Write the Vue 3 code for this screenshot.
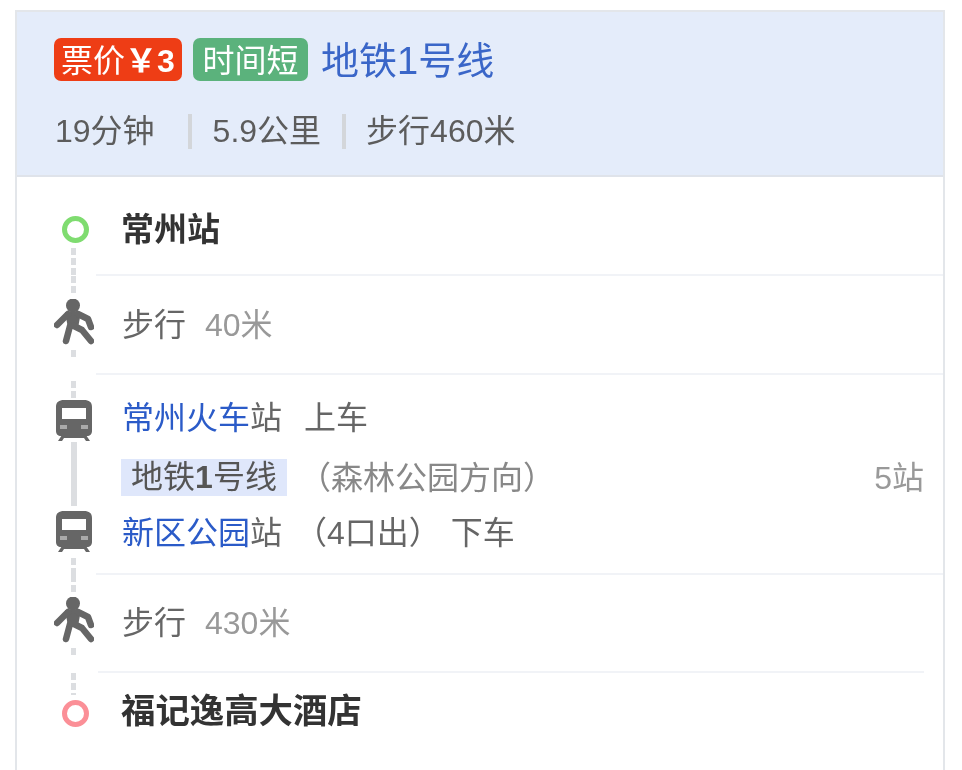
<script setup>
// route card: one transit plan with its steps
const WALK_COLOR = "#666";
</script>

<template>
  <section class="card">
    <header class="head">
      <div class="titleRow">
        <span class="tag red">票价<b>￥3</b></span>
        <span class="tag green">时间短</span>
        <a class="title">地铁1号线</a>
      </div>
      <div class="meta">
        <span>19分钟</span>
        <i class="sep first"></i>
        <span>5.9公里</span>
        <i class="sep"></i>
        <span>步行460米</span>
      </div>
    </header>

    <div class="row">
      <div class="rail">
        <span class="ring start"></span>
        <span class="dash d28"></span>
      </div>
      <div class="body single top">
        <strong>常州站</strong>
      </div>
    </div>

    <div class="row">
      <div class="rail">
        <span class="dash d19"></span>
        <svg class="walk" viewBox="0 0 40 46">
          <circle cx="19" cy="6.5" r="7" :fill="WALK_COLOR" />
          <path d="M11 13H27L24 29H14Z" :fill="WALK_COLOR" />
          <path d="M14 15L3 26M24 15L34 20L37 28M16 27L12 42M20 27L28 31L37 42" :stroke="WALK_COLOR" stroke-width="6.5" stroke-linecap="round" stroke-linejoin="round" fill="none" />
        </svg>
        <span class="dash d25"></span>
      </div>
      <div class="body single">
        <span class="walkText">步行</span><span class="dist">40米</span>
      </div>
    </div>

    <div class="row">
      <div class="rail">
        <span class="dash d19b"></span>
        <svg class="train" viewBox="0 0 36 42">
          <path fill-rule="evenodd" d="M8 1H28C33 1 36 3 36 8V32C36 35 34 37 31 37H5C2 37 0 35 0 32V8C0 3 3 1 8 1ZM6 9V20H30V9Z" fill="#666" />
          <path d="M4 26H11V30H4ZM25 26H32V30H25Z" fill="#aaa" />
          <path d="M2 42L6 36H30L34 42H30L28 39H8L6 42Z" fill="#666" />
        </svg>
        <span class="solid"></span>
        <svg class="train" viewBox="0 0 36 42">
          <path fill-rule="evenodd" d="M8 1H28C33 1 36 3 36 8V32C36 35 34 37 31 37H5C2 37 0 35 0 32V8C0 3 3 1 8 1ZM6 9V20H30V9Z" fill="#666" />
          <path d="M4 26H11V30H4ZM25 26H32V30H25Z" fill="#aaa" />
          <path d="M2 42L6 36H30L34 42H30L28 39H8L6 42Z" fill="#666" />
        </svg>
        <span class="dash d23"></span>
      </div>
      <div class="body transit">
        <div class="line"><a>常州火车</a>站<span class="act">上车</span></div>
        <div class="line subway">
          <span class="lineTag">地铁<b>1</b>号线</span>
          <span class="dir">（森林公园方向）</span>
          <span class="count">5站</span>
        </div>
        <div class="line last"><a>新区公园</a>站<span class="exit">（4口出）</span><span class="off">下车</span></div>
      </div>
    </div>

    <div class="row">
      <div class="rail">
        <span class="dash d22"></span>
        <svg class="walk" viewBox="0 0 40 46">
          <circle cx="19" cy="6.5" r="7" :fill="WALK_COLOR" />
          <path d="M11 13H27L24 29H14Z" :fill="WALK_COLOR" />
          <path d="M14 15L3 26M24 15L34 20L37 28M16 27L12 42M20 27L28 31L37 42" :stroke="WALK_COLOR" stroke-width="6.5" stroke-linecap="round" stroke-linejoin="round" fill="none" />
        </svg>
        <span class="dash d25"></span>
      </div>
      <div class="body single short">
        <span class="walkText">步行</span><span class="dist">430米</span>
      </div>
    </div>

    <div class="row">
      <div class="rail">
        <span class="dash d24"></span>
        <span class="ring end"></span>
      </div>
      <div class="body single bottom">
        <strong>福记逸高大酒店</strong>
      </div>
    </div>
  </section>
</template>

<style scoped>
.card {
  width: 930px;
  margin: 10px 0 0 15px;
  box-sizing: border-box;
  border: 2px solid #e3e6ea;
  border-bottom: 0;
  font-family: "Liberation Sans", "Noto Sans CJK SC", sans-serif;
  font-size: 32px;
  color: #666;
  filter: blur(0.5px);
}

.head {
  height: 163px;
  background: #e4ecfa;
  border-bottom: 2px solid #dfe3ea;
  padding-left: 37px;
}

.titleRow {
  display: flex;
  align-items: center;
  height: 43px;
  padding-top: 26px;
}

.tag {
  height: 43px;
  line-height: 46px;
  border-radius: 7px;
  color: #fff;
  text-align: center;
  font-size: 32px;
  white-space: nowrap;
}

.red {
  width: 128px;
  background: #ee3d15;
}

.green {
  width: 115px;
  margin-left: 11px;
  background: #5bb27c;
}

.title {
  margin: 4px 0 0 13px;
  font-size: 38px;
  line-height: 43px;
  color: #3a66c8;
}

.meta {
  display: flex;
  align-items: center;
  margin-top: 30px;
  height: 40px;
  line-height: 40px;
  padding-left: 1px;
  color: #5c5c5c;
}

.sep {
  width: 4px;
  height: 35px;
  margin: 0 21px;
  background: #d3d6da;
}

.sep.first {
  margin-left: 33px;
}

.sep:not(.first) {
  margin-right: 20px;
}

.row {
  display: flex;
}

.rail {
  width: 79px;
  flex: none;
  display: flex;
  flex-direction: column;
  align-items: center;
  padding-left: 37px;
  box-sizing: border-box;
}

.ring {
  width: 27px;
  height: 27px;
  box-sizing: border-box;
  border-radius: 50%;
  border: 5px solid;
  flex: none;
}

.start {
  margin-top: 39px;
  margin-bottom: 5px;
  border-color: #7fdc70;
}

.end {
  margin-top: 5px;
  border-color: #fb8f97;
}

.dash {
  width: 5px;
  flex: none;
  margin-left: -4px;
  background: repeating-linear-gradient(to bottom, #dcdee1 0 7px, transparent 7px 10px);
}

.d28 { height: 28px; }
.d19 { height: 19px; margin-bottom: 4px; }
.d25 { height: 10px; margin-top: 5px; margin-bottom: 15px; }
.d19b { height: 18px; margin-top: 6px; }
.d22 { height: 20px; margin-bottom: 2px; }
.d23 { height: 17px; margin-top: 6px; }
.d24 { height: 22px; }

.walk {
  width: 40px;
  height: 46px;
  flex: none;
  margin-left: -2px;
}

.train {
  width: 36px;
  height: 42px;
  flex: none;
  margin-left: -2px;
}

.solid {
  width: 6px;
  height: 64px;
  flex: none;
  margin: 1px 0 4px -2px;
  background: #dcdee1;
}

.body {
  flex: 1;
  padding-left: 26px;
  padding-right: 19px;
  border-bottom: 2px solid #f1f3f7;
  box-sizing: border-box;
}

.single {
  height: 99px;
  line-height: 98px;
}

.single.top {
  line-height: 106px;
}

.single.top strong {
  font-size: 33px;
}

.single.short {
  height: 98px;
  line-height: 97px;
  margin: 0 19px 0 2px;
  padding-left: 24px;
}

.single.bottom {
  line-height: 77px;
  border-bottom: 0;
}

strong {
  margin-left: -1px;
  font-size: 34.4px;
  color: #333;
}

.walkText {
  color: #666;
}

.dist {
  margin-left: 19px;
  color: #999;
}

.transit {
  height: 200px;
  padding-top: 23px;
}

.line {
  height: 40px;
  line-height: 40px;
  white-space: nowrap;
}

.line a {
  color: #2b5bc8;
}

.act {
  margin-left: 22px;
}

.subway {
  display: flex;
  align-items: center;
  margin-top: 21px;
  height: 37px;
}

.lineTag {
  width: 166px;
  height: 37px;
  line-height: 37px;
  margin-left: -1px;
  text-align: center;
  background: #dfe7fb;
  color: #555;
}

.dir {
  margin-left: 12px;
  color: #888;
}

.count {
  margin-left: auto;
  color: #999;
}

.last {
  margin-top: 17px;
}

.exit {
  margin-left: 13px;
}

.off {
  margin-left: 10px;
}
</style>

<style>
html,
body {
  overflow: hidden;
  background: #fff;
}
</style>
